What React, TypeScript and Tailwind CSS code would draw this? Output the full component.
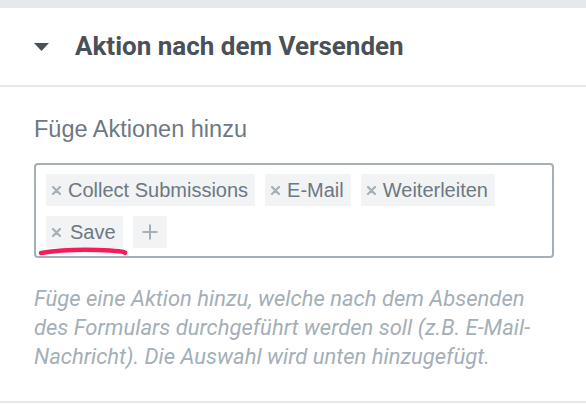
const tags = ["Collect Submissions", "E-Mail", "Weiterleiten"];

function XIcon() {
  return (
    <svg width="9" height="9" viewBox="0 0 9 9" className="shrink-0">
      <path d="M1 1 L8 8 M8 1 L1 8" stroke="#a4afb7" strokeWidth="2.2" strokeLinecap="round" />
    </svg>
  );
}

function Tag({ label, extra }: { label: string; extra?: boolean }) {
  return (
    <div className="flex h-[32px] items-center gap-[7px] bg-[#f1f3f5] pl-[6px] pr-[7px]">
      <XIcon />
      <span className={extra ? "ml-[2px]" : ""}>{label}</span>
    </div>
  );
}

export default function App() {
  return (
    <div className="w-[586px] h-[404px] bg-white font-['Liberation_Sans',Arial,sans-serif]">
      <div className="h-[8px] bg-[#e6e9ec]" />

      {/* section header */}
      <div className="flex h-[77px] items-center pl-[34px]">
        <svg width="15" height="8" viewBox="0 0 15 8" className="mt-[1px]">
          <path d="M0 0 H15 L7.5 8 Z" fill="#495157" />
        </svg>
        <h2 className="ml-[26px] font-['Roboto',sans-serif] text-[26px] font-bold text-[#495157]">
          Aktion nach dem Versenden
        </h2>
      </div>
      <div className="h-[2px] bg-[#e6e9ec]" />

      <div className="px-[34px] pt-[28px] pb-[30px]">
        <label className="block text-[23.5px] leading-[28px] text-[#6d7882]">Füge Aktionen hinzu</label>

        <div className="relative mt-[20px] w-[520px] rounded-[4px] border-2 border-[#a4afb7] pl-[10px] pr-[10px] pt-[9px] pb-[8px]">
          <div className="flex flex-wrap gap-[10px] text-[20px] text-[#6d7882]">
            {tags.map((t) => (
              <Tag key={t} label={t} />
            ))}
            <Tag label="Save" extra />
            <div className="flex h-[32px] w-[34px] items-center justify-center bg-[#f1f3f5]">
              <svg width="16" height="16" viewBox="0 0 16 16">
                <path d="M8 0.5 V15.5 M0.5 8 H15.5" stroke="#a4afb7" strokeWidth="2" />
              </svg>
            </div>
          </div>
          {/* red annotation under "Save" */}
          <svg width="92" height="14" viewBox="0 0 92 14" className="absolute left-[1px] top-[79px]">
            <path d="M4 9 Q 30 5 60 6 T 88 9" stroke="#f41c5b" strokeWidth="4.5" fill="none" strokeLinecap="round" />
          </svg>
        </div>

        <p className="mt-[26px] whitespace-nowrap font-['Roboto',sans-serif] text-[22px] italic leading-[29px] text-[#a4afb7]">
          Füge eine Aktion hinzu, welche nach dem Absenden
          <br />
          des Formulars durchgeführt werden soll (z.B. E-Mail-
          <br />
          Nachricht). Die Auswahl wird unten hinzugefügt.
        </p>
      </div>
      <div className="h-[2px] bg-[#e6e9ec]" />
    </div>
  );
}
